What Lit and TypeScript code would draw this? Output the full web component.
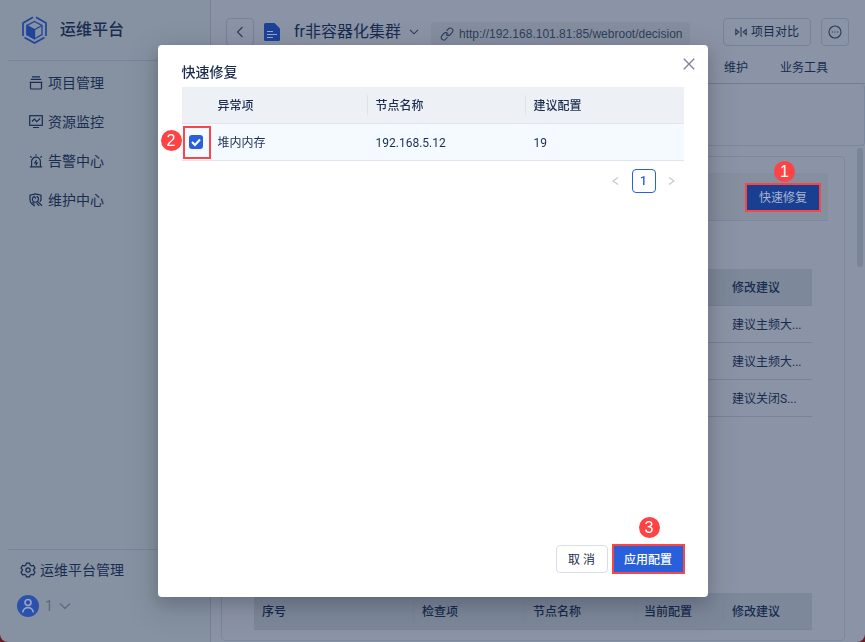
import { LitElement, html, css, svg } from "lit";
import { customElement, state } from "lit/decorators.js";

const icon = (w: number, h: number, body: unknown, cls = "") =>
  html`<svg class="ico ${cls}" width=${w} height=${h} viewBox="0 0 ${w} ${h}" aria-hidden="true">${body}</svg>`;

const projectIcon = icon(14, 14, svg`<path d="M3 .8h8M1.800 3.300h10.400M.7 6.300h12.600M1.500 6.300v5.700q0 1 1 1h9q1 0 1-1V6.300"/>`);
const monitorIcon = icon(14, 14, svg`<rect x=".7" y=".7" width="12.6" height="9.6"/><path d="M3 6.500l2.400-2.400 2.400 2.600 3.400-3.400M4 12.500h6"/>`);
const alarmIcon = icon(14, 14, svg`<path d="M.8 12.800h12.400M2.600 12.800V7.600a4.400 4.400 0 0 1 8.800 0v5.200M7 .2v1.600M1.200 2.200l1.400 1.400M12.800 2.200l-1.400 1.400M7.600 6L5.800 8.800h2.400L6.800 11.400"/>`);
const serviceIcon = icon(14, 14, svg`<path d="M6 13C3 11.800 1.200 9.600 1 6.800V2.200L6.400.8l5.600 1.400v4.600l-1 2"/><path d="M5.400 3.400a3 3 0 1 0 3.800 3.800M5.400 3.400l1.400 2.200M9.200 7.200C9.800 5.400 9 3.800 7.600 3.200M8.400 8.400l4.600 4.400M3.400 9l2 2.600M7.600 10.200l2.600 2.600"/>`);
const gearIcon = icon(16, 16, svg`<path d="M6.400 1.200h3.200l.6 1.900 1.300.8 2-.5 1.500 2.700-1.400 1.500v1l1.400 1.500-1.500 2.700-2-.5-1.300.8-.6 1.800H6.400l-.6-1.800-1.300-.8-2 .5L1 10.100l1.400-1.500v-1L1 6.100l1.500-2.700 2 .5 1.300-.8z"/><circle cx="8" cy="8" r="2.100"/>`);

const NAV = [
  { label: "项目管理", icon: projectIcon },
  { label: "资源监控", icon: monitorIcon },
  { label: "告警中心", icon: alarmIcon },
  { label: "维护中心", icon: serviceIcon },
];

@customElement("app-sidebar")
export class AppSidebar extends LitElement {
  static styles = css`
    :host { display: flex; flex-direction: column; border-right: 1px solid #77839a; background: #8692a2; color: #1a2d50; }
    .brand { display: flex; align-items: center; gap: 12px; height: 60px; margin-left: 8px; padding-left: 13px; border-bottom: 1px solid #78849a; }
    .name { font-size: 16px; font-weight: 500; line-height: 24px; }
    nav { display: flex; flex-direction: column; padding: 2px 0 0 29px; }
    a { display: flex; align-items: center; color: inherit; text-decoration: none; font-size: 14px; line-height: 20px; }
    nav a { gap: 5px; height: 39px; }
    .bottom { margin: auto 0 0 8px; border-top: 1px solid #78849a; }
    .manage { gap: 4px; height: 40px; padding-left: 12px; }
    .user { display: flex; align-items: center; gap: 6px; height: 22px; margin: 5px 0 25px 9px; padding: 0; border: 0; background: none; color: #5b6880; font: inherit; font-size: 14px; }
    .ico { flex: none; fill: none; stroke: currentColor; stroke-width: 1.2; }
  `;
  render() {
    return html`
      <div class="brand">
        <svg width="27" height="28" viewBox="0 0 27 28" fill="none" stroke="#1f449c" stroke-width="1.700" aria-hidden="true">
          <path d="M12 1.200L2 7v13M25 20V7L15 1.200M3.500 21.500L13.500 27l10-5.500"/>
          <path d="M13.500 5.500l7.500 4v9l-7.500 4.200-7.500-4.200v-9z" stroke-width="1.300"/>
          <path d="M6 9.500l7.500 4.200v9L6 18.500z" fill="#1f449c" stroke-width="1.300"/>
          <path d="M13.500 13.700L21 9.500" stroke-width="1.300"/>
        </svg>
        <span class="name">运维平台</span>
      </div>
      <nav>${NAV.map((n) => html`<a href="#">${n.icon}<span>${n.label}</span></a>`)}</nav>
      <div class="bottom">
        <a class="manage" href="#">${gearIcon}<span>运维平台管理</span></a>
        <button class="user">
          <svg width="22" height="22" viewBox="0 0 22 22" fill="none" stroke="#95a3c4" stroke-width="1.700" aria-hidden="true">
            <circle cx="11" cy="11" r="11" fill="#2b51ac" stroke="none"/><circle cx="11" cy="7.500" r="3"/><path d="M5.800 17.500c.3-6.400 10.100-6.400 10.400 0"/>
          </svg>
          <span>1</span>
          ${icon(12, 8, svg`<path d="M1 1.500l5 5 5-5"/>`)}
        </button>
      </div>`;
  }
}

@customElement("app-workspace")
export class AppWorkspace extends LitElement {
  static styles = css`
    :host { display: flex; flex-direction: column; min-width: 0; background: #8b94a6; color: #182b4e; font-size: 12px; line-height: 18px; }
    button { font: inherit; color: inherit; }
    .ico { flex: none; fill: none; stroke: #2a3b5b; stroke-width: 1.1; }
    header { padding-top: 18px; border-bottom: 1px solid #727e95; }
    .bar { display: flex; align-items: center; height: 28px; padding: 0 16px 0 15px; }
    .box { display: flex; align-items: center; justify-content: center; gap: 4px; box-sizing: border-box; min-width: 28px; height: 28px; padding: 0; border: 1px solid #75829a; border-radius: 4px; background: none; white-space: nowrap; }
    .compare { width: 88px; margin: 0 10px 0 auto; }
    .doc { margin: 0 14px 0 10px; }
    .project { display: flex; align-items: center; gap: 8px; padding: 0; border: 0; background: none; font-size: 16px; line-height: 24px; white-space: nowrap; }
    .url { display: flex; align-items: center; gap: 5px; box-sizing: border-box; height: 24px; margin: 4px 0 0 12px; padding: 0 7px 0 9px; border-radius: 4px; background: #848e9f; color: #2f3e5a; font-family: "Liberation Sans", sans-serif; text-decoration: none; white-space: nowrap; }
    .tabs { display: flex; justify-content: flex-end; align-items: center; gap: 32px; height: 31px; margin-top: 6px; padding-right: 37px; }
    .tabs a { color: inherit; text-decoration: none; }
    .summary { box-sizing: border-box; height: 62px; margin-left: 10px; border: 1px solid #7b879c; border-top: 0; border-radius: 4px; }
    .content { display: flex; flex: 1; gap: 12px; padding: 0 2px 1px 10px; }
    .card { display: flex; flex: 1; flex-direction: column; box-sizing: border-box; margin-top: 10px; padding: 16px 16px 10px; border: 1px solid #7b879c; border-radius: 4px; }
    .rail { width: 6px; height: 119px; margin-top: 2px; border-radius: 3px; background: #7a8598; }
    .strip { display: flex; align-items: center; justify-content: flex-end; box-sizing: border-box; height: 48px; padding: 2px 9px 0 0; border-bottom: 1px solid #7b879c; background: #868f9f; }
    .mark { position: relative; display: flex; }
    .fix { box-sizing: border-box; width: 72px; height: 25px; padding: 0; border: 0; outline: 2px solid #fb4444; background: #193f92; color: #a9b5cf; white-space: nowrap; }
    .mark app-step { position: absolute; left: 27px; bottom: 28px; }
    table { width: calc(100% - 32px); margin: 48px 16px 0; border-collapse: separate; border-spacing: 0; table-layout: fixed; }
    .second { margin-top: auto; }
    th, td { box-sizing: border-box; height: 37px; padding: 2px 8px 0; border-bottom: 1px solid #77839a; text-align: left; overflow: hidden; white-space: nowrap; text-overflow: ellipsis; }
    th { background: linear-gradient(#788499, #788499) right center / 1px 20px no-repeat #7d889a; font-weight: 500; }
    th:last-child { background: #7d889a; }
    .c1 { width: 160px; }
    .c4 { width: 88px; }
  `;
  render() {
    return html`
      <header>
        <div class="bar">
          <button class="box" aria-label="返回">${icon(8, 12, svg`<path d="M6.500 1L1.500 6l5 5"/>`)}</button>
          <svg class="doc" width="16" height="18" viewBox="0 0 16 18" aria-hidden="true">
            <path d="M1.500 0h9L16 5.500v11q0 1.500-1.500 1.500h-13Q0 18 0 16.500v-15Q0 0 1.500 0z" fill="#1c4299"/>
            <path d="M3 8.500h6M3 11.500h10M3 14.500h6" stroke="#9ba8c4" stroke-width="1.200"/>
          </svg>
          <button class="project">fr非容器化集群 ${icon(10, 6, svg`<path d="M1 .8l4 4 4-4"/>`)}</button>
          <a class="url" href="#">
            ${icon(14, 14, svg`<path d="M6.600 4l1.600-1.900c2.300-2.700 6.200.4 4 3.200L10.300 7.600c-1.500 1.800-4.200 1-4.300-1.200M7.600 10l-1.800 2c-2.300 2.600-6.200-.4-4-3.200l2-2.400c1.500-1.700 4.200-.9 4.300 1.200"/>`)}
            <span>http://192.168.101.81:85/webroot/decision</span>
          </a>
          <button class="box compare">
            ${icon(12, 10, svg`<path d="M.8 2.500v5l3-2.500zM11.200 2.500v5l-3-2.500zM6 0v10"/>`)}<span>项目对比</span>
          </button>
          <button class="box" aria-label="更多">
            ${icon(14, 14, svg`<circle cx="7" cy="7" r="6"/><path d="M3.800 7h1.200M6.400 7h1.200M9 7h1.200"/>`)}
          </button>
        </div>
        <div class="tabs"><a href="#">维护</a><a href="#">业务工具</a></div>
      </header>
      <section class="summary"></section>
      <div class="content">
        <section class="card">
          <div class="strip">
            <div class="mark"><button class="fix">快速修复</button><app-step n="1"></app-step></div>
          </div>
          <table>
            <colgroup><col /><col class="c4" /></colgroup>
            <thead><tr><th></th><th>修改建议</th></tr></thead>
            <tbody>${["建议主频大...", "建议主频大...", "建议关闭S..."].map((t) => html`<tr><td></td><td>${t}</td></tr>`)}</tbody>
          </table>
          <table class="second">
            <colgroup><col class="c1" /><col /><col /><col class="c4" /><col class="c4" /></colgroup>
            <thead><tr>${["序号", "检查项", "节点名称", "当前配置", "修改建议"].map((t) => html`<th>${t}</th>`)}</tr></thead>
          </table>
        </section>
        <div class="rail"></div>
      </div>`;
  }
}

@customElement("app-step")
export class AppStep extends LitElement {
  static properties = { n: {} };
  declare n: string;
  static styles = css`
    :host { display: block; width: 21px; height: 21px; border-radius: 50%; background: #fd4343; color: #fff; font: 16px/21px "Liberation Sans", sans-serif; text-align: center; }
  `;
  render() {
    return html`${this.n}`;
  }
}

@customElement("fix-dialog")
export class FixDialog extends LitElement {
  @state() private checked = true;

  static styles = css`
    :host { display: flex; flex-direction: column; box-sizing: border-box; padding: 16px 24px 24px; border-radius: 4px; background: #fff; color: #1c2d4f; font-size: 12px; line-height: 18px; box-shadow: 0 6px 16px rgba(0, 10, 30, 0.16), 0 9px 28px 8px rgba(0, 10, 30, 0.1); }
    button { font: inherit; color: inherit; padding: 0; }
    .ico { fill: none; stroke: currentColor; stroke-width: 1.3; }
    .head { display: flex; justify-content: space-between; height: 26px; }
    h2 { margin: 0; font-size: 14px; font-weight: 500; line-height: 22px; }
    .close { display: flex; height: 12px; margin: -3px -11px 0 0; border: 0; background: none; color: #77839a; }
    table { width: 100%; border-collapse: separate; border-spacing: 0; table-layout: fixed; }
    .pick { width: 28px; }
    th, td { box-sizing: border-box; height: 37px; padding: 2px 8px 0; border-bottom: 1px solid #e1e6ee; text-align: left; }
    th { background: linear-gradient(#dfe4ec, #dfe4ec) right center / 1px 20px no-repeat #edf0f5; font-weight: 500; }
    th:first-child, th:last-child { background: #edf0f5; }
    td { background: #f4faff; }
    .tick { position: relative; padding: 0 0 0 7px; }
    input { display: block; appearance: none; width: 14px; height: 14px; margin: 0; border: 1px solid #b4bdcc; border-radius: 3px; background: #fff; }
    input:checked { border: 0; background: #295fdb; }
    .tick .ico { position: absolute; left: 9px; top: 13px; stroke: #fff; stroke-width: 2; pointer-events: none; }
    .frame { position: absolute; left: 1px; top: 2px; width: 24px; height: 29px; border: 2px solid #f94747; pointer-events: none; }
    .tick app-step { position: absolute; left: -21px; top: 6px; }
    .pages { display: flex; justify-content: flex-end; gap: 4px; margin-top: 8px; }
    .pages button { display: flex; align-items: center; justify-content: center; box-sizing: border-box; width: 24px; height: 24px; border: 0; border-radius: 4px; background: none; color: #c3c9d3; }
    .pages .on { border: 1px solid #295fdb; color: #295fdb; font-weight: 500; }
    .foot { display: flex; justify-content: flex-end; gap: 5px; margin-top: auto; }
    .foot button { box-sizing: border-box; height: 28px; padding-top: 2px; border-radius: 4px; white-space: nowrap; }
    .foot .cancel { width: 52px; border: 1px solid #d9dde9; background: #fff; }
    .mark { position: relative; display: flex; }
    .mark app-step { position: absolute; left: 26px; bottom: 35px; }
    .foot .apply { width: 71px; border: 0; border-radius: 0; outline: 2px solid #f94747; outline-offset: -1px; background: #295fdb; color: #fff; font-weight: 500; }
  `;
  render() {
    return html`
      <div class="head">
        <h2>快速修复</h2>
        <button class="close" aria-label="关闭">${icon(12, 12, svg`<path d="M.8.800l10.400 10.400M11.200.800L.8 11.200"/>`)}</button>
      </div>
      <table>
        <colgroup><col class="pick" /><col /><col /><col /></colgroup>
        <thead><tr><th></th><th>异常项</th><th>节点名称</th><th>建议配置</th></tr></thead>
        <tbody>
          <tr>
            <td class="tick">
              <input type="checkbox" aria-label="堆内内存" .checked=${this.checked}
                @change=${(e: Event) => (this.checked = (e.target as HTMLInputElement).checked)} />
              ${icon(10, 10, svg`<path d="M1 5l3 3 5-5.500"/>`)}
              <div class="frame"></div>
              <app-step n="2"></app-step>
            </td>
            <td>堆内内存</td><td>192.168.5.12</td><td>19</td>
          </tr>
        </tbody>
      </table>
      <div class="pages">
        <button aria-label="上一页">${icon(7, 8, svg`<path d="M6 .5L1 4l5 3.500"/>`)}</button>
        <button class="on">1</button>
        <button aria-label="下一页">${icon(7, 8, svg`<path d="M1 .5L6 4 1 7.500"/>`)}</button>
      </div>
      <div class="foot">
        <button class="cancel">取 消</button>
        <div class="mark"><button class="apply">应用配置</button><app-step n="3"></app-step></div>
      </div>`;
  }
}

@customElement("app-root")
export class AppRoot extends LitElement {
  static styles = css`
    :host { display: block; background: #6a1c26; font-family: Roboto, "Noto Sans CJK SC", sans-serif; }
    .page { display: grid; grid-template-columns: 211px minmax(0, 1fr); min-height: 100vh; overflow: hidden; border-radius: 0 0 8px 8px; }
    .layer { position: fixed; inset: 0; display: flex; align-items: center; justify-content: center; }
    fix-dialog { width: 550px; max-width: calc(100% - 32px); height: calc(100% - 90px); }
  `;
  render() {
    return html`
      <div class="page"><app-sidebar></app-sidebar><app-workspace></app-workspace></div>
      <div class="layer"><fix-dialog role="dialog" aria-modal="true" aria-label="快速修复"></fix-dialog></div>`;
  }
}
